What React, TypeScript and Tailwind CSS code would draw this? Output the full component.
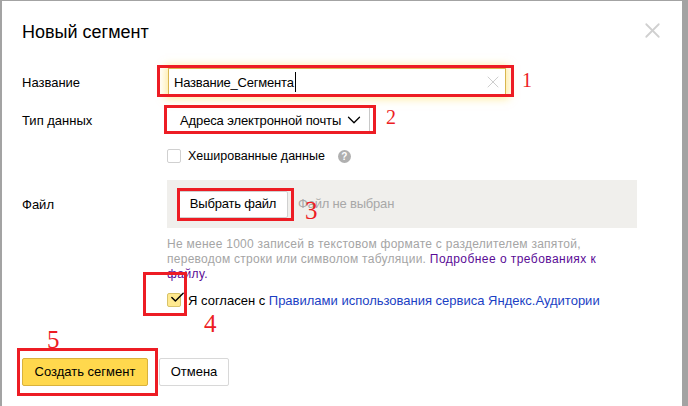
import { Check, ChevronDown, X } from "lucide-react";

const font = "font-['Liberation_Sans',Arial,sans-serif]";

function Mark({ className }: { className: string }) {
  return <div className={`absolute border-[3px] border-[#ed1c24] ${className}`} />;
}

function Num({ className, children }: { className: string; children: string }) {
  return (
    <div className={`absolute font-['Liberation_Serif',serif] text-[#ed1c24] leading-none ${className}`}>
      {children}
    </div>
  );
}

export default function App() {
  return (
    <div className={`${font} relative h-[406px] w-[688px] overflow-hidden bg-[#a3a3a3] pt-px pl-[2px] pr-[6px] text-[13px] text-black`}>
      <div className="relative h-[405px] bg-white pl-[20px]">
        <X className="absolute right-[17px] top-[17px] text-[#d0d0d0]" size={25} strokeWidth={1.7} />
        <h1 className="pt-[21px] text-[18px] leading-[20px]">Новый сегмент</h1>

        <div className="mt-[26px] flex h-[28px] items-center">
          <div className="w-[146px] pt-px">Название</div>
          <div className="flex h-[28px] w-[338px] items-center justify-between border border-[#d9b64f] pl-[5px] pr-[2px] shadow-[0_0_8px_3px_rgba(255,220,90,0.55)]">
            <span className="border-r border-black pr-px pt-px tracking-[-0.2px]">Название_Сегмента</span>
            <X className="text-[#c4c4c4]" size={20} strokeWidth={1} />
          </div>
        </div>

        <div className="mt-[10px] flex h-[28px] items-center">
          <div className="w-[146px] pt-px">Тип данных</div>
          <div className="flex h-[28px] w-[202px] items-center border-r border-[#c8c8c8] pl-[12px] text-[13px]">
            <span className="pt-px tracking-[-0.12px]">Адреса электронной почты</span>
            <ChevronDown className="ml-[2px]" size={22} strokeWidth={1.4} />
          </div>
        </div>

        <div className="mt-[13px] flex h-[18px] items-center pl-[145px]">
          <div className="h-[14px] w-[14px] rounded-[2px] border border-[#d0d0d0]" />
          <span className="ml-[7px] text-[12.5px]">Хешированные данные</span>
          <span className="ml-[13px] flex h-[13px] w-[13px] items-center justify-center rounded-full bg-[#b0b0b0] text-[10px] font-bold text-white">?</span>
        </div>

        <div className="mt-[15px] flex">
          <div className="w-[145px] pt-[15px]">Файл</div>
          <div className="flex h-[48px] w-[470px] items-center bg-[#f0efec] pl-[11px]">
            <div className="flex h-[27px] w-[110px] items-center justify-center rounded-[2px] border border-[#d0d0d0] bg-white tracking-[-0.2px]">
              Выбрать файл
            </div>
            <span className="ml-[10px] tracking-[-0.2px] text-[#a8a8a8]">Файл не выбран</span>
          </div>
        </div>

        <p className="mt-[9px] ml-[145px] w-[440px] text-[12px] leading-[15px] tracking-[0.26px] text-[#a5a5a5]">
          Не менее 1000 записей в текстовом формате с разделителем запятой, переводом строки или символом табуляции.{" "}
          <span className="tracking-[0.45px] text-[#5a0b96]">Подробнее о требованиях к файлу.</span>
        </p>

        <div className="mt-[11px] flex h-[16px] items-center pl-[145px]">
          <div className="relative mb-[2px] h-[14px] w-[14px] rounded-[2px] border border-[#d8c36a] bg-[#ffe98f]">
            <Check className="absolute -top-[5px] left-[1px] text-black" size={17} strokeWidth={2} />
          </div>
          <span className="ml-[7px] whitespace-nowrap">
            Я согласен с <span className="text-[#1b3fc4]">Правилами использования сервиса Яндекс.Аудитории</span>
          </span>
        </div>

        <div className="mt-[49px] flex items-center">
          <div className="flex h-[28px] w-[126px] items-center justify-center rounded-[2px] border border-[#d9b23c] bg-[#ffd84d]">
            Создать сегмент
          </div>
          <div className="ml-[11px] flex h-[28px] w-[70px] items-center justify-center rounded-[2px] border border-[#d8d8d8]">
            Отмена
          </div>
        </div>
      </div>

      <Mark className="left-[157px] top-[65px] h-[32px] w-[357px]" />
      <Mark className="left-[164px] top-[105px] h-[29px] w-[212px]" />
      <Mark className="left-[177px] top-[188px] h-[33px] w-[117px]" />
      <Mark className="left-[143px] top-[272px] h-[44px] w-[44px]" />
      <Mark className="left-[17px] top-[348px] h-[48px] w-[141px]" />

      <Num className="left-[522px] top-[70px] text-[20px]">1</Num>
      <Num className="left-[386px] top-[107px] text-[20px]">2</Num>
      <Num className="left-[305px] top-[198px] text-[25px]">3</Num>
      <Num className="left-[204px] top-[311px] text-[25px]">4</Num>
      <Num className="left-[47px] top-[327px] text-[25px]">5</Num>
    </div>
  );
}
